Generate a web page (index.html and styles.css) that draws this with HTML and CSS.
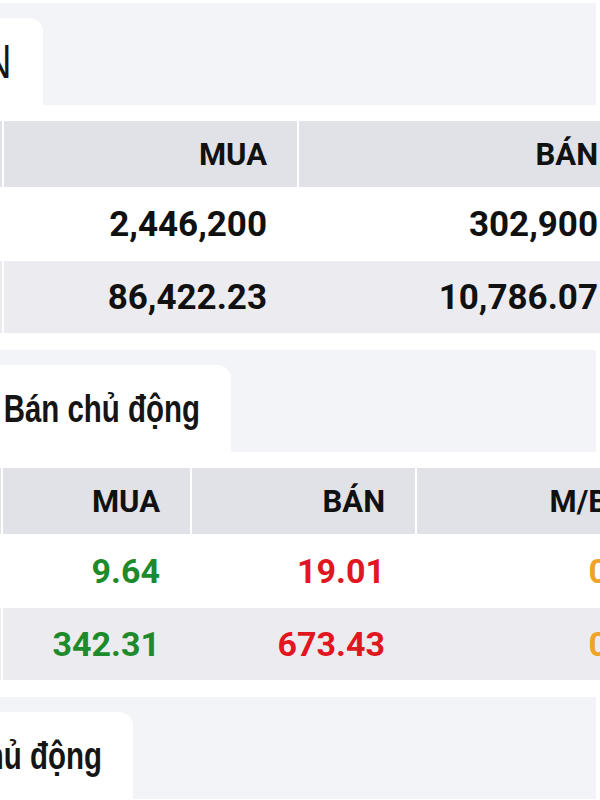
FILE: index.html
```html
<!DOCTYPE html>
<html lang="vi">
<head>
<meta charset="utf-8">
<title>Giao dịch</title>
<link rel="stylesheet" href="styles.css">
</head>
<body>
<div class="page">
  <section class="block">
    <div class="bar">
      <div class="tab tab-1"><h2 class="title title-big">GIAO DỊCH TRONG PHIÊN</h2></div>
    </div>
    <div class="table t1">
      <div class="row head">
        <div class="cell label"></div>
        <div class="cell">MUA</div>
        <div class="cell">BÁN</div>
      </div>
      <div class="row r1">
        <div class="cell label">Khối lượng</div>
        <div class="cell">2,446,200</div>
        <div class="cell">302,900</div>
      </div>
      <div class="row r2">
        <div class="cell label">Giá trị</div>
        <div class="cell">86,422.23</div>
        <div class="cell">10,786.07</div>
      </div>
    </div>
  </section>

  <section class="block">
    <div class="bar">
      <div class="tab tab-2"><h2 class="title">Mua chủ động - Bán chủ động</h2></div>
    </div>
    <div class="table t2">
      <div class="row head">
        <div class="cell label"></div>
        <div class="cell">MUA</div>
        <div class="cell">BÁN</div>
        <div class="cell mb-head">M/B</div>
      </div>
      <div class="row r1">
        <div class="cell label">Khối lượng</div>
        <div class="cell up">9.64</div>
        <div class="cell down">19.01</div>
        <div class="cell ratio">0.51</div>
      </div>
      <div class="row r2">
        <div class="cell label">Giá trị</div>
        <div class="cell up">342.31</div>
        <div class="cell down">673.43</div>
        <div class="cell ratio">0.51</div>
      </div>
    </div>
  </section>

  <section class="block">
    <div class="bar">
      <div class="tab tab-3"><h2 class="title">Top mua chủ động</h2></div>
    </div>
  </section>
</div>
</body>
</html>
```

FILE: styles.css
```css
html, body {
  margin: 0;
  padding: 0;
  background: #ffffff;
}

body {
  width: 600px;
  height: 800px;
  overflow: hidden;
  font-family: Roboto, "Liberation Sans", sans-serif;
  color: #111111;
}

.page {
  margin-left: -400px;
  width: 1100px;
  padding-top: 3px;
}

.block {
  margin-bottom: 17px;
}

.bar {
  width: 996px;
  height: 102px;
  background: #f3f4f7;
  padding-top: 15px;
  box-sizing: border-box;
  display: flex;
  align-items: stretch;
}

.tab {
  background: #ffffff;
  border-top-right-radius: 14px;
  display: flex;
  align-items: center;
  justify-content: flex-end;
  padding-right: 31px;
  box-sizing: border-box;
  white-space: nowrap;
  overflow: hidden;
}

.tab-1 { width: 443px; }
.tab-2 { width: 631px; }
.tab-3 { width: 533px; }

.title {
  margin: 0;
  font-family: "Liberation Sans", Arial, sans-serif;
  font-weight: 700;
  font-size: 39px;
  line-height: 1;
  color: #151515;
  transform: scaleX(0.755);
  transform-origin: right center;
}

.title-big {
  font-size: 48px;
  font-weight: 400;
  transform: scaleX(0.8);
}

.table {
  margin-top: 16px;
}

.row {
  display: grid;
  align-items: center;
}

.t1 .row {
  grid-template-columns: 402px 295px 331px;
}

.t2 .row {
  grid-template-columns: 401px 189px 225px 285px;
}

.cell {
  padding-right: 30px;
  box-sizing: border-box;
  height: 100%;
  display: flex;
  align-items: center;
  justify-content: flex-end;
  font-weight: 700;
  font-size: 34px;
  white-space: nowrap;
}

.t1 .r1 .cell,
.t1 .r2 .cell {
  font-size: 35px;
}

.cell + .cell {
  border-left: 2px solid transparent;
}

.row .cell:nth-child(2) {
  border-left-color: #ffffff;
}

.label {
  color: #111111;
}

.head {
  height: 66px;
  background: #ffffff;
}

.head .cell {
  background: #e1e2e8;
  font-size: 31px;
}

.head .cell + .cell {
  border-left-color: #ffffff;
}

.r1 {
  height: 74px;
  background: #ffffff;
}

.r2 {
  height: 72px;
  background: #ececf0;
}

.up { color: #1d8a2c; }
.down { color: #e2161f; }
.ratio {
  color: #f0a326;
  padding-right: 43px;
}

.mb-head {
  padding-right: 92px;
}
```
